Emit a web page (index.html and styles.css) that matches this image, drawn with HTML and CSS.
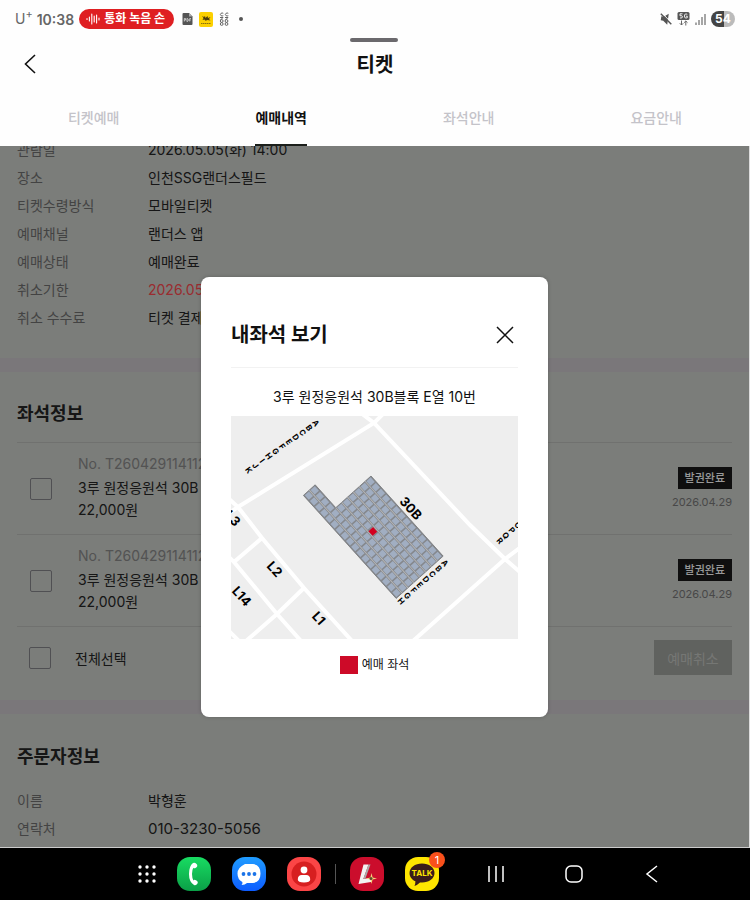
FILE: index.html
```html
<!DOCTYPE html>
<html lang="ko">
<head>
    <meta charset="UTF-8">
    <title>티켓</title>
    <meta name="viewport" content="width=device-width, initial-scale=1.0">
    <link rel="stylesheet" href="styles.css">
</head>
<body>
    <header class="header">
        <div class="status-bar">
            <span class="carrier">U<sup>+</sup></span>
            <span class="time">10:38</span>
            <span class="rec-pill">
                <svg width="14" height="12" viewBox="0 0 14 12" stroke="#fff" stroke-width="1.1" stroke-linecap="round">
                    <path d="M1 5.500v1M3.400 4v4M5.800 1v10M8.200 3v6M10.600 2v8M13 5v2"/>
                </svg>
                <span class="rec-text">통화 녹음 손</span>
            </span>
            <span class="status-icons">
                <svg width="11" height="12" viewBox="0 0 10 12">
                    <path d="M1 0h5.500L10 3.500V11a1 1 0 0 1-1 1H1a1 1 0 0 1-1-1V1a1 1 0 0 1 1-1z" fill="#555"/>
                    <path d="M6.500 0v3.500H10" fill="#aaa"/>
                    <path d="M1.800 8.500v-3h1.200v1.600H1.800M4.400 5.500v3q1.500 0 1.500-1.500t-1.500-1.500M7.200 8.500v-3h1.300M7.200 7h1" fill="none" stroke="#fff" stroke-width=".6"/>
                </svg>
                <svg width="14" height="15" viewBox="0 0 14 15">
                    <rect width="14" height="15" rx="2" fill="#fcd000"/>
                    <path d="M3 4l2 1 1-1 .5 2 2-2 .5 2 2.500-1-1.500 2 1.500 1.500-3-.5-2 .8-1-1.300-2 .5 1-2z" fill="#4c3d0c"/>
                    <path d="M2 11.500h10" stroke="#8a7109" stroke-width="1" stroke-dasharray="1.500 .5"/>
                </svg>
                <svg width="10" height="14" viewBox="0 0 10 14" fill="none" stroke="#666" stroke-width="1">
                    <path d="M4.300 1.300A1.800 1.500 0 1 0 4.300 3.700M9.300 1.300A1.800 1.500 0 1 0 9.300 3.700M1 5.500h3L1.500 8M6 5.500h3L6.500 8"/>
                    <circle cx="2.700" cy="9" r="1.400"/><circle cx="7.500" cy="9" r="1.400"/>
                    <circle cx="2.700" cy="12" r="1.400"/><circle cx="7.500" cy="12" r="1.400"/>
                </svg>
                <i class="dot"></i>
            </span>
            <span class="status-right">
                <svg width="12" height="12" viewBox="0 0 12 12">
                    <path d="M1 4h2.500L8 .5v11L3.500 8H1z" fill="#555" transform="rotate(8 6 6)"/>
                    <path d="M2 0l10 10.500" stroke="#fff" stroke-width="1"/>
                    <path d="M.8 .8l10.500 10.500" stroke="#555" stroke-width="1.400"/>
                </svg>
                <svg width="13" height="14" viewBox="0 0 13 14">
                    <rect x=".5" width="12" height="8" rx="1.500" fill="#555"/>
                    <path d="M5.500 1.800H3v2q2.500-.6 2.500 1T3 6M10.300 2.300q-2.800-1.200-2.800 1.700t2.800 1.700V4.200H9" fill="none" stroke="#fff" stroke-width=".9"/>
                    <path d="M4.500 8.500v4.500M2.800 11.300L4.500 13l1.700-1.700M8.800 13.500V9M7.100 10.700L8.800 9l1.700 1.700" fill="none" stroke="#666" stroke-width="1"/>
                </svg>
                <svg width="11" height="12" viewBox="0 0 11 12" stroke="#777" stroke-width="1.300">
                    <path d="M1 9.500V12M4 7v5M7 4v8M10 1v11"/>
                </svg>
                <span class="battery">54</span>
            </span>
        </div>
        <div class="handle"></div>
        <div class="title-bar">
            <button class="back" aria-label="뒤로">
                <svg width="12" height="20" viewBox="0 0 12 20" fill="none" stroke="#111" stroke-width="1.600">
                    <path d="M11 1L1.500 10l9.500 9"/>
                </svg>
            </button>
            <h1>티켓</h1>
        </div>
        <nav class="tabs">
            <a href="#">티켓예매</a>
            <a href="#" class="active">예매내역</a>
            <a href="#">좌석안내</a>
            <a href="#">요금안내</a>
        </nav>
    </header>

    <main class="main">
        <div class="content">
            <section class="info">
                <dl>
                    <dt>관람일</dt><dd>2026.05.05(화) 14:00</dd>
                    <dt>장소</dt><dd>인천SSG랜더스필드</dd>
                    <dt>티켓수령방식</dt><dd>모바일티켓</dd>
                    <dt>예매채널</dt><dd>랜더스 앱</dd>
                    <dt>예매상태</dt><dd>예매완료</dd>
                    <dt>취소기한</dt><dd class="red">2026.05</dd>
                    <dt>취소 수수료</dt><dd>티켓 결제</dd>
                </dl>
            </section>

            <section class="seats">
                <h2>좌석정보</h2>
                <div class="seat-row">
                    <input type="checkbox" id="seat1">
                    <label for="seat1">
                        <span class="no">No. T260429114112</span>
                        <span>3루 원정응원석 30B</span>
                        <span>22,000원</span>
                    </label>
                    <div class="issue">
                        <span class="badge">발권완료</span>
                        <span class="date">2026.04.29</span>
                    </div>
                </div>
                <div class="seat-row">
                    <input type="checkbox" id="seat2">
                    <label for="seat2">
                        <span class="no">No. T260429114112</span>
                        <span>3루 원정응원석 30B</span>
                        <span>22,000원</span>
                    </label>
                    <div class="issue">
                        <span class="badge">발권완료</span>
                        <span class="date">2026.04.29</span>
                    </div>
                </div>
                <div class="all-row">
                    <input type="checkbox" id="all">
                    <label for="all">전체선택</label>
                    <button class="cancel">예매취소</button>
                </div>
            </section>

            <section class="orderer">
                <h2>주문자정보</h2>
                <dl>
                    <dt>이름</dt><dd>박형훈</dd>
                    <dt>연락처</dt><dd class="num">010-3230-5056</dd>
                </dl>
            </section>
        </div>

        <div class="overlay">
            <div class="modal" role="dialog" aria-labelledby="modal-title">
                <div class="modal-head">
                    <h2 id="modal-title">내좌석 보기</h2>
                    <button class="close" aria-label="닫기">
                        <svg width="18" height="18" viewBox="0 0 18 18" stroke="#111" stroke-width="1.500">
                            <path d="M1 1l16 16M17 1L1 17"/>
                        </svg>
                    </button>
                </div>
                <p class="seat-name">3루 원정응원석 30B블록 E열 10번</p>
                <svg class="map" viewBox="0 0 287 223">
                    <rect width="287" height="223" fill="#eee"/>
                    <!-- aisles -->
                    <g fill="none" stroke="#fff" stroke-width="4">
                        <path d="M152 -2L143 7L7 91L-2 97M130 -3L143 7L239 109L274 143L290 157"/>
                        <path d="M290 131L274 143L182 225"/>
                        <path d="M-2 83L7 91L31 122L73 172L121 225"/>
                        <path d="M31 122L3 146M73 172L46 198L15 225M-2 141L3 146L46 198L70 225M-2 215L8 225"/>
                    </g>
                    <!-- block 30B: one dashed line per seat row, A to H -->
                    <g transform="translate(140 60) rotate(48)">
                        <path d="M0 0H107.800V63.200H-30.800V47.400H0z" fill="#85888d" stroke="#77797d" stroke-width=".8"/>
                        <path d="M0 7.900H107.800M0 15.800H107.800M0 23.700H107.800M0 31.600H107.800M0 39.500H107.800M0 47.400H107.800M-30.800 55.300H107.800" stroke="#b4b4b4" stroke-width="1"/>
                        <path d="M.8 4H107.800M.8 11.900H107.800M.8 19.800H107.800M.8 27.700H107.800M.8 35.600H107.800M.8 43.500H107.800M-30 51.400H107.800M-30 59.300H107.800" stroke="#a1aec2" stroke-width="5.700" stroke-dasharray="6.100 1.600"/>
                        <rect x="39.300" y="32.600" width="6.200" height="6.200" fill="#d3001f"/>
                    </g>
                    <g class="block-name">
                        <text transform="translate(180 92) rotate(48)" y="5">30B</text>
                        <text transform="translate(44 153) rotate(48)" y="5">L2</text>
                        <text transform="translate(11 180) rotate(48)" y="5">L14</text>
                        <text transform="translate(88 202) rotate(48)" y="5">L1</text>
                        <text transform="translate(2 102) rotate(48)" y="5">L3</text>
                    </g>
                    <g class="row-name">
                        <text transform="translate(85 7) rotate(55)" x="0 0 0 0 0 0 0 0 0 0 0" y="3 11.200 19.400 27.600 35.800 44 52.200 60.400 68.600 76.800 85">ABCDEFGHIJK</text>
                        <text transform="translate(214 147) rotate(49)" x="0 0 0 0 0 0 0 0" y="3 11.300 19.600 27.900 36.200 44.500 52.800 61.100">ABCDEFGH</text>
                        <text transform="translate(287 109) rotate(49)" x="0 0 0 0" y="3 11 19 27">OPQR</text>
                    </g>
                </svg>
                <p class="legend"><i></i>예매 좌석</p>
            </div>
        </div>
    </main>

    <footer class="dock">
        <div class="apps">
            <button aria-label="앱">
                <svg width="18" height="20" viewBox="1 0 18 20" fill="#fff">
                    <circle cx="3" cy="3" r="1.700"/><circle cx="10" cy="3" r="1.700"/><circle cx="17" cy="3" r="1.700"/>
                    <circle cx="3" cy="10" r="1.700"/><circle cx="10" cy="10" r="1.700"/><circle cx="17" cy="10" r="1.700"/>
                    <circle cx="3" cy="17" r="1.700"/><circle cx="10" cy="17" r="1.700"/><circle cx="17" cy="17" r="1.700"/>
                </svg>
            </button>
            <button class="app phone" aria-label="전화">
                <svg width="34" height="34" viewBox="0 0 34 34">
                    <path d="M16 6q-4 3-4 11t5 11q2 1 3.500-1.500 1-2-1.500-3.300-1.800-.8-2.500.2-1.500-2.500-1.500-6.400t1.300-6.200q.7 1 2.200.2 2.500-1.300 1.500-3.500Q18.300 4.800 16 6z" fill="#fff"/>
                </svg>
            </button>
            <button class="app message" aria-label="메시지">
                <svg width="34" height="34" viewBox="0 0 34 34">
                    <path d="M13 7h8q7.500 1 7.500 9.500T21 26h-6q-2 1.800-5.500 2 1.300-1.200.8-3Q5.500 22.500 5.500 16.500T13 7z" fill="#fff"/>
                    <circle cx="11.500" cy="17" r="1.900" fill="#1a73e8"/><circle cx="17" cy="17" r="1.900" fill="#1a73e8"/><circle cx="22.500" cy="17" r="1.900" fill="#1a73e8"/>
                </svg>
            </button>
            <button class="app contact" aria-label="연락처">
                <svg width="34" height="34" viewBox="0 0 34 34">
                    <circle cx="17" cy="17" r="12.500" fill="#d71f20"/>
                    <circle cx="17" cy="13" r="3.400" fill="#fff"/>
                    <path d="M10.800 22.500q0-4.500 4-4.500h4.400q4 0 4 4.500 0 3-6.200 3t-6.200-3z" fill="#fff"/>
                </svg>
            </button>
            <span class="divider"></span>
            <button class="app landers" aria-label="랜더스">
                <svg width="34" height="34" viewBox="0 0 34 34">
                    <path d="M13.500 7.500h5L13.300 22l9.200-1.500-1.500 4.500-12.500 2z" fill="#f2f2f2"/>
                    <path d="M18.500 7.500h2L15.300 21.700l-2 .3z" fill="#aaa"/>
                    <path d="M21.500 16l1.100 4.400 4.400 1.100-4.400 1.100-1.100 4.400-1.100-4.400-4.400-1.100 4.400-1.100z" fill="#f3d37a"/>
                    <circle cx="21" cy="21.500" r="1.500" fill="#5b4b2a"/>
                </svg>
            </button>
            <button class="app talk" aria-label="카카오톡">
                <svg width="34" height="34" viewBox="0 0 34 34">
                    <path d="M17 6.500c7 0 12.500 4 12.500 9.500S24 25.500 17 25.500l-2-.1q-3 2.800-5.500 3.600 1-2.500.9-4.700C7 22.800 4.500 20 4.500 16 4.500 10.500 10 6.500 17 6.500z" fill="#3a1d1a"/>
                    <text x="17" y="19">TALK</text>
                </svg>
                <span class="count">1</span>
            </button>
        </div>
        <div class="system">
            <button aria-label="최근 앱">
                <svg width="18" height="18" viewBox="0 0 18 18" stroke="#fff" stroke-width="1.500"><path d="M2 1v16M9 1v16M16 1v16"/></svg>
            </button>
            <button aria-label="홈">
                <svg width="18" height="18" viewBox="0 0 18 18" fill="none" stroke="#fff" stroke-width="1.500"><rect x="1" y="1" width="16" height="16" rx="5"/></svg>
            </button>
            <button aria-label="뒤로 가기">
                <svg width="18" height="18" viewBox="0 0 18 18" fill="none" stroke="#fff" stroke-width="1.500"><path d="M14 1L4 9l10 8"/></svg>
            </button>
        </div>
    </footer>
</body>
</html>
```
FILE: styles.css
```css
* {
    margin: 0;
    padding: 0;
    box-sizing: border-box;
}

body {
    display: flex;
    flex-direction: column;
    height: 100vh;
    font-family: Inter, "Noto Sans CJK KR", sans-serif;
    font-size: 14px;
    color: #252525;
    background: #fefefe;
}

button {
    border: none;
    background: none;
    font-family: inherit;
    cursor: pointer;
}

svg {
    display: block;
}

/* Header */
.header {
    position: relative;
    flex: none;
    background: #fefefe;
}

.status-bar {
    display: flex;
    align-items: center;
    height: 38px;
    padding: 0 15px;
    color: #666;
}

.carrier {
    margin-right: 4px;
    line-height: 20px;
}

.carrier sup {
    font-size: 11px;
    line-height: 1px;
}

.time {
    margin-right: 5px;
    font-weight: 600;
}

.rec-pill {
    display: flex;
    align-items: center;
    gap: 4px;
    width: 95px;
    height: 20px;
    padding: 0 7px;
    border-radius: 10px;
    background: #df1f22;
    color: #fff;
}

.rec-text {
    flex: 1;
    white-space: nowrap;
    font-size: 12px;
    line-height: 20px;
    font-weight: bold;
}

.status-icons {
    display: flex;
    align-items: center;
    gap: 6px;
    margin-left: 8px;
}

.dot {
    width: 4px;
    height: 4px;
    margin-left: 4px;
    border-radius: 50%;
    background: #555;
}

.status-right {
    display: flex;
    align-items: center;
    gap: 5px;
    margin-left: auto;
}

.battery {
    width: 24px;
    height: 16px;
    border-radius: 8px;
    background: linear-gradient(90deg, #444 54%, #bbb 54%);
    color: #fff;
    font-size: 12px;
    line-height: 16px;
    font-weight: bold;
    text-align: center;
}

.handle {
    position: absolute;
    top: 38px;
    left: 50%;
    width: 48px;
    height: 4px;
    margin-left: -25px;
    border-radius: 2px;
    background: #6b696d;
}

.title-bar {
    display: grid;
    grid-template-columns: 60px 1fr 60px;
    align-items: center;
    height: 52px;
}

.back {
    justify-self: start;
    padding: 4px 24px;
}

.title-bar h1 {
    padding-top: 2px;
    font-size: 20px;
    line-height: 28px;
    text-align: center;
    color: #111;
}

.tabs {
    display: grid;
    grid-template-columns: repeat(4, 1fr);
    justify-items: center;
}

.tabs a {
    height: 56px;
    line-height: 56px;
    font-weight: 500;
    color: #c4c3c9;
    text-decoration: none;
}

.tabs .active {
    color: #111;
    font-weight: bold;
    border-bottom: 2px solid #1b1f1b;
}

/* Page under the popup */
.main {
    position: relative;
    flex: 1;
    min-height: 0;
    overflow: hidden;
    border-right: 1px solid #ddd;
    border-bottom: 1px solid #ccc;
    background: #cdd0cb;
}

.content {
    margin-top: -10px;
}

section {
    padding: 0 17px;
}

section h2 {
    font-size: 18px;
    line-height: 28px;
}

dl {
    display: grid;
    grid-template-columns: 131px 1fr;
    line-height: 28px;
}

dt {
    color: #717171;
}

.num {
    font-size: 15px;
}

.red {
    color: #ff4a50;
}

.info {
    padding-bottom: 26px;
}

.seats {
    padding-top: 28px;
    padding-bottom: 25px;
    border-top: 14px solid #cbc6cb;
    border-bottom: 14px solid #cbc6cb;
}

.seats h2 {
    padding-bottom: 14px;
}

.seat-row {
    display: flex;
    align-items: center;
    height: 92px;
    padding-left: 13px;
    border-top: 1px solid #bbbdb9;
}

.seat-row label {
    flex: 1;
    margin-left: 26px;
    padding-bottom: 3px;
}

.seat-row label span {
    display: block;
    line-height: 22px;
}

.seat-row .no {
    margin-bottom: 2px;
    color: #8a8a8a;
}

input[type="checkbox"] {
    appearance: none;
    width: 22px;
    height: 22px;
    border: 1px solid #85858a;
    border-radius: 2px;
}

.issue {
    display: flex;
    flex-direction: column;
    align-items: flex-end;
    gap: 4px;
}

.badge {
    padding: 0 7px;
    background: #191919;
    color: #fff;
    font-size: 11px;
    line-height: 22px;
    font-weight: 500;
}

.date {
    color: #787878;
    font-size: 11px;
    line-height: 18px;
}

.all-row {
    display: flex;
    align-items: center;
    padding: 13px 0 0 12px;
    border-top: 1px solid #bbbdb9;
}

.all-row label {
    flex: 1;
    margin-left: 24px;
}

.cancel {
    width: 78px;
    height: 35px;
    background: #a0a39e;
    color: #c4c6c2;
    font-size: 14px;
}

.orderer {
    padding-top: 29px;
}

.orderer h2 {
    margin-bottom: 16px;
}

/* Popup */
.overlay {
    position: absolute;
    inset: 0;
    display: flex;
    align-items: center;
    justify-content: center;
    background: rgba(0, 0, 0, 0.4);
}

.modal {
    width: 347px;
    max-width: 90%;
    padding: 25px 30px 42px;
    border-radius: 8px;
    background: #fff;
    color: #111;
    box-shadow: 0 0 4px rgba(0, 0, 0, 0.2);
}

.modal-head {
    display: flex;
    align-items: center;
    justify-content: space-between;
    height: 66px;
    padding-top: 2px;
    border-bottom: 1px solid #f2f2f2;
}

.modal-head h2 {
    font-size: 20px;
    line-height: 28px;
}

.close {
    padding: 4px;
}

.seat-name {
    margin: 18px 0 8px;
    line-height: 22px;
    text-align: center;
}

.map {
    width: 100%;
    height: auto;
}

.block-name {
    font-size: 13px;
    font-weight: bold;
    text-anchor: middle;
}

.row-name {
    font-size: 8px;
    font-weight: bold;
    text-anchor: middle;
}

.legend {
    display: flex;
    align-items: center;
    justify-content: center;
    gap: 4px;
    margin-top: 16px;
    font-size: 12px;
    line-height: 20px;
}

.legend i {
    width: 18px;
    height: 18px;
    background: #cd0a28;
}

/* Bottom dock */
.dock {
    display: flex;
    flex: none;
    align-items: center;
    justify-content: space-between;
    height: 52px;
    padding: 0 89px 0 138px;
    background: #000;
}

.apps {
    display: flex;
    align-items: center;
    gap: 21px;
}

.app {
    position: relative;
    width: 34px;
    height: 34px;
    border-radius: 13px;
}

.phone {
    background: linear-gradient(#18dc62, #0b9f47);
}

.message {
    background: linear-gradient(#1f9cff, #0d5cff);
}

.contact {
    background: #fb4546;
}

.divider {
    width: 1px;
    height: 20px;
    margin: 0 -7px;
    background: #555;
}

.landers {
    background: #cb0d2c;
}

.talk {
    background: #fee500;
}

.talk text {
    fill: #fee500;
    font-size: 8px;
    font-weight: bold;
    text-anchor: middle;
}

.count {
    position: absolute;
    top: -5px;
    right: -6px;
    width: 16px;
    height: 16px;
    border-radius: 50%;
    background: #f9501b;
    color: #fff;
    font-size: 11px;
    line-height: 16px;
}

.system {
    display: flex;
    gap: 60px;
}
```
